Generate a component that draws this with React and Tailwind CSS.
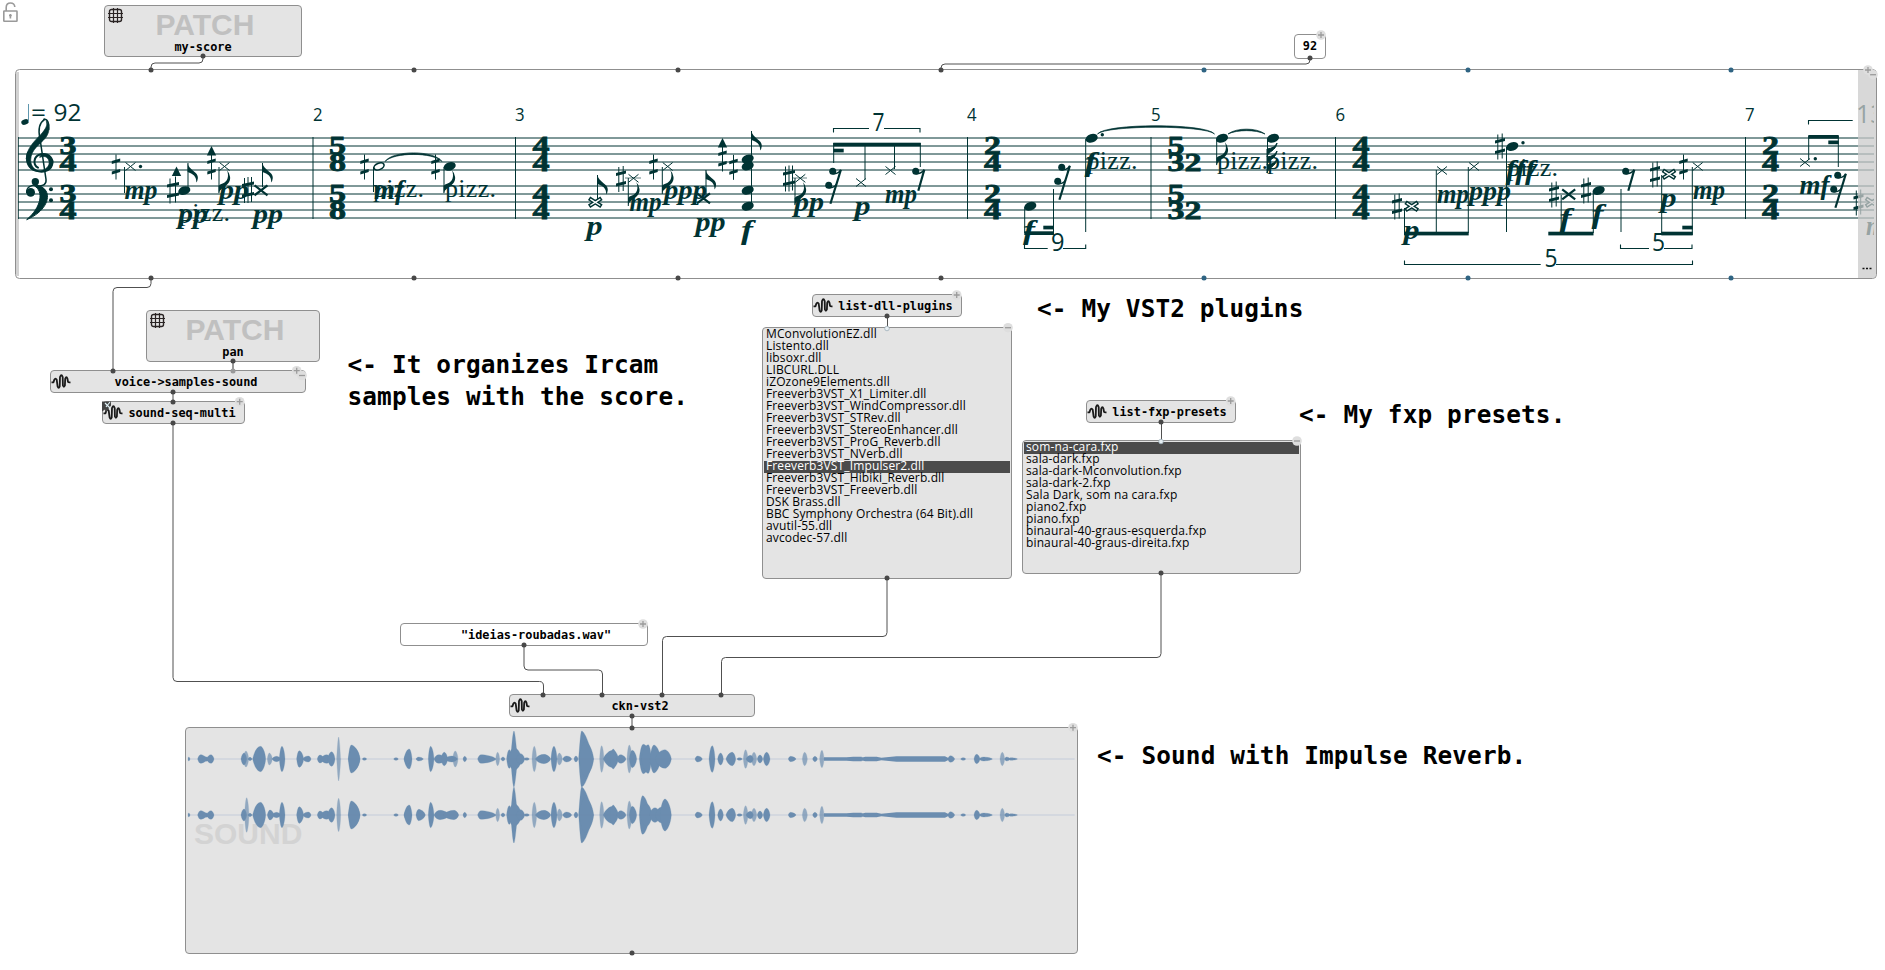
import React from 'react';

const INK = '#003333';

/* ---------- music symbols ---------- */

const Line = ({ x1, y1, x2, y2, w = 1, o = 1 }) => (
  <line x1={x1} y1={y1} x2={x2} y2={y2} stroke={INK} strokeWidth={w} opacity={o} />
);
const Stem = ({ x, a, b }) => <Line x1={x} x2={x} y1={a} y2={b} />;
const Head = ({ x, y }) => (
  <ellipse cx={x} cy={y} rx="6.200" ry="4.200" fill={INK} transform={`rotate(-18 ${x} ${y})`} />
);
const Cross = ({ x, y, rx = 5, ry = 4, w = 1 }) => (
  <path
    d={`M${x - rx} ${y - ry}L${x + rx} ${y + ry}M${x - rx} ${y + ry}L${x + rx} ${y - ry}`}
    stroke={INK}
    strokeWidth={w}
    fill="none"
  />
);
const BoldCross = ({ x, y }) => <Cross x={x} y={y} rx={6.5} ry={5} w={2.2} />;
const OpenCross = ({ x, y }) => (
  <g>
    <Cross x={x} y={y} rx={6.2} ry={4} w={4.2} />
    <path
      d={`M${x - 5} ${y - 3.2}L${x + 5} ${y + 3.2}M${x - 5} ${y + 3.2}L${x + 5} ${y - 3.2}`}
      stroke="#fff"
      strokeWidth="1.400"
    />
  </g>
);
const FlagUp = ({ x, y }) => (
  <path d={`M${x} ${y}c1 7 11 9 10.3 15q-.3 3-1.6 4.5c.4-6-3.500-9-8.700-10.500z`} fill={INK} />
);
const FlagDown = ({ x, y }) => (
  <path d={`M${x} ${y}c1-7 12.500-8 11.500-17q-.4-4-3.300-7c2.800 6 .6 12-4.200 13.500q-3 .8-4 2.500z`} fill={INK} />
);
const Slants = ({ x, y, r }) => (
  <path
    d={`M${x - r} ${y - 3}v-3l${2 * r}-2.600v3zM${x - r} ${y + 7.500}v-3l${2 * r}-2.600v3z`}
    fill={INK}
  />
);
const Sharp = ({ x, y }) => (
  <g>
    <Line x1={x - 2.2} x2={x - 2.2} y1={y - 12} y2={y + 13} />
    <Line x1={x + 2.2} x2={x + 2.2} y1={y - 13} y2={y + 12} />
    <Slants x={x} y={y} r={5} />
  </g>
);
const TripleSharp = ({ x, y }) => (
  <g>
    <Line x1={x - 3.5} x2={x - 3.5} y1={y - 12} y2={y + 13} />
    <Line x1={x} x2={x} y1={y - 13} y2={y + 13} />
    <Line x1={x + 3.5} x2={x + 3.5} y1={y - 13} y2={y + 12} />
    <Slants x={x} y={y} r={6} />
  </g>
);
const QuarterSharp = ({ x, y, arrow }) => (
  <g>
    <Line x1={x} x2={x} y1={y - (arrow ? 14 : 12.5)} y2={y + 12.5} />
    <Slants x={x} y={y} r={4.2} />
    {arrow && <path d={`M${x} ${y - 21}l4.700 9.500h-9.400z`} fill={INK} />}
  </g>
);
const ArrowSharp = ({ x, y }) => (
  <g>
    <Line x1={x - 4} x2={x - 4} y1={y - 12} y2={y + 13} />
    <Line x1={x + 1.5} x2={x + 1.5} y1={y - 14} y2={y + 12} />
    <Slants x={x - 1} y={y} r={6} />
    <path d={`M${x + 2.5} ${y - 24}l4.700 9.500h-9.400z`} fill={INK} />
  </g>
);
const Rest8 = ({ x, y }) => (
  <g fill="none" stroke={INK}>
    <circle cx={x} cy={y} r="3.5" fill={INK} stroke="none" />
    <path d={`M${x} ${y + 2.5}q5 .5 8.500-4`} strokeWidth="1.500" />
    <path d={`M${x + 8.6} ${y - 1.6}l-6 21`} strokeWidth="2.200" />
  </g>
);
const Rest16 = ({ x, y }) => (
  <g fill="none" stroke={INK}>
    <circle cx={x} cy={y} r="3.5" fill={INK} stroke="none" />
    <circle cx={x - 4} cy={y + 14} r="3.5" fill={INK} stroke="none" />
    <path d={`M${x} ${y + 2.5}q5 .5 8-4M${x - 4} ${y + 16.5}q5 .5 8-4`} strokeWidth="1.500" />
    <path d={`M${x + 8.2} ${y - 1.6}l-10.500 34`} strokeWidth="2.200" />
  </g>
);
const Dot = ({ x, y }) => <circle cx={x} cy={y} r="1.700" fill={INK} />;
const Beam = ({ a, b, y, h = 3.7 }) => <rect x={a} y={y} width={b - a} height={h} fill={INK} />;

const Dyn = ({ x, y, w, children }) => (
  <text
    x={x}
    y={y + 0.6}
    textLength={w}
    lengthAdjust="spacingAndGlyphs"
    fontFamily="'Liberation Serif', serif"
    fontStyle="italic"
    fontWeight="700"
    fontSize="27"
    fill={INK}
  >
    {children}
  </text>
);
const Pizz = ({ x, y }) => (
  <text x={x} y={y} textLength="51" fontFamily="'Liberation Serif', serif" fontSize="26" fill={INK}>
    pizz.
  </text>
);
const Num = ({ x, y, s = 17.5, w, children }) => (
  <text
    x={x}
    y={y}
    textLength={w}
    lengthAdjust="spacingAndGlyphs"
    fontFamily="'Open Sans', 'Noto Sans', sans-serif"
    fontSize={s}
    fill={INK}
  >
    {children}
  </text>
);
const TimeSig = ({ x, top, bottom }) =>
  [0, 48].map((dy) => (
    <g key={dy} fontFamily="'Liberation Serif', serif" fontWeight="700" fontSize="26" fill={INK} stroke={INK} strokeWidth=".8">
      <text x={x} y={154 + dy} textLength={17} lengthAdjust="spacingAndGlyphs">
        {top}
      </text>
      <text x={x} y={171 + dy} textLength={17 * bottom.length} lengthAdjust="spacingAndGlyphs">
        {bottom}
      </text>
    </g>
  ));
const Bracket = ({ a, b, y, t, g1, g2 }) => (
  <path d={`M${a} ${y + t}V${y}H${g1}${g2 ? `M${g2} ${y}H${b}V${y + t}` : ''}`} stroke={INK} fill="none" strokeWidth="1.100" />
);
const Tie = ({ a, b, y, p }) => (
  <path
    d={`M${a} ${y}C${a + 8} ${p} ${b - 8} ${p} ${b} ${y}C${b - 9} ${p + 2} ${a + 9} ${p + 2} ${a} ${y}z`}
    fill={INK}
    stroke={INK}
    strokeWidth=".7"
  />
);

const Clefs = () => (
  <g transform="scale(.33333)" fill="none" stroke={INK} strokeLinecap="round">
    <path d="M114 503C98 495 100 468 122 463C148 458 162 478 156 495C150 515 125 518 108 512C86 503 76 480 84 458" strokeWidth="6" />
    <path d="M122 463C150 458 164 480 155 499C146 514 128 516 118 514C138 510 150 498 147 484C144 470 132 466 120 472z" fill={INK} strokeWidth="2" />
    <path d="M79 475C79 448 102 424 122 404C138 386 143 376 139 364C149 378 150 396 137 413C120 434 93 447 92 480C92 498 103 510 120 514C95 517 79 500 79 475z" fill={INK} strokeWidth="2" />
    <path d="M134 358C118 368 114 390 120 416L138 538C140 552 130 560 112 557" strokeWidth="4.500" />
    <path d="M132 358C142 356 149 372 146 388" strokeWidth="5" />
    <circle cx="106" cy="545" r="11" fill={INK} stroke="none" />
    <circle cx="92" cy="577" r="13" fill={INK} stroke="none" />
    <path d="M80 578C78 560 98 553 112 556" strokeWidth="4" />
    <path d="M104 556C158 556 160 625 80 659C124 622 132 574 104 558z" fill={INK} strokeWidth="3" />
    <circle cx="153" cy="568" r="6" fill={INK} stroke="none" />
    <circle cx="153" cy="601" r="6" fill={INK} stroke="none" />
  </g>
);

const STAFF = [138, 146, 154, 162, 170, 186, 194, 202, 210, 218];
const BARS = [313, 515.5, 967.5, 1151, 1335.5, 1745.5];

const Notes = () => (
  <g>
    {/* bar 1 */}
    <QuarterSharp x={116} y={167} />
    <Cross x={130.5} y={166.5} />
    <Dot x={140.5} y={166.5} />
    <Stem x={124.5} a={167} b={193} />
    <Dyn x={124.500} y={198.700} w={33}>mp</Dyn>
    <ArrowSharp x={174} y={190.5} />
    <Head x={184.3} y={190.6} />
    <Stem x={188} a={163} b={190} />
    <FlagUp x={187.600} y={163} />
    <Pizz x={179} y={220.500} />
    <Dyn x={178} y={222.700} w={30}>pp</Dyn>
    <QuarterSharp x={211.5} y={167} arrow />
    <Cross x={224.5} y={166.5} />
    <Stem x={219} a={167} b={193} />
    <FlagDown x={218.600} y={194} />
    <Dyn x={219} y={198.200} w={30}>pp</Dyn>
    <TripleSharp x={248} y={190} />
    <BoldCross x={261} y={190.300} />
    <Stem x={262.5} a={163} b={187} />
    <FlagUp x={262.500} y={163} />
    <Dyn x={253} y={222.700} w={30}>pp</Dyn>
    {/* bar 2 */}
    <QuarterSharp x={364.5} y={167} />
    <ellipse cx="379" cy="166.400" rx="5.300" ry="3.200" fill="#fff" stroke={INK} strokeWidth="1.600" transform="rotate(-22 379 166.400)" />
    <Stem x={373.5} a={167} b={192} />
    <Pizz x={373} y={197} />
    <Dyn x={374} y={198} w={30}>mf</Dyn>
    <Tie a={385} b={442} y={161.500} p={150} />
    <QuarterSharp x={435.5} y={167} />
    <Head x={449.7} y={166.4} />
    <Stem x={444} a={167} b={193} />
    <FlagDown x={443.600} y={194} />
    <Pizz x={445} y={197} />
    {/* bar 3 */}
    <OpenCross x={595.3} y={202.3} />
    <Stem x={597.5} a={175} b={199} />
    <FlagUp x={597.500} y={175} />
    <Dyn x={586.500} y={234.700} w={16}>p</Dyn>
    <Sharp x={621} y={179} />
    <Cross x={633.5} y={178.300} />
    <Line x1={625} x2={641} y1={178} y2={178} o={0.6} />
    <Stem x={628.300} a={178} b={206} />
    <FlagDown x={628} y={206} />
    <Dyn x={629.500} y={210.400} w={32}>mp</Dyn>
    <QuarterSharp x={653.500} y={167} />
    <Cross x={667.7} y={166.5} />
    <Stem x={662.3} a={167} b={194} />
    <FlagDown x={662} y={194} />
    <Dyn x={664} y={198.700} w={43}>ppp</Dyn>
    <BoldCross x={703.5} y={198.300} />
    <Stem x={706} a={170} b={196} />
    <FlagUp x={705.800} y={170} />
    <Dyn x={695.500} y={230.700} w={30}>pp</Dyn>
    <QuarterSharp x={722.5} y={159} arrow />
    <QuarterSharp x={733.5} y={167.300} />
    {[159, 166, 190.300, 206.300].map((y) => <Head key={y} x={747.700} y={y} />)}
    <Stem x={751.5} a={131} b={207} />
    <FlagUp x={751.500} y={131} />
    <Dyn x={741} y={238.500} w={12}>f</Dyn>
    <TripleSharp x={789} y={178.5} />
    <Cross x={800.300} y={178.300} />
    <Line x1={792} x2={807} y1={178} y2={178} o={0.6} />
    <Stem x={795} a={178} b={205} />
    <FlagDown x={794.600} y={206} />
    <Dyn x={794} y={210.400} w={30}>pp</Dyn>
    <Bracket a={833.5} b={920} y={128.5} t={4} g1={869} g2={884} />
    <Num x={872.500} y={130.700} s={25} w={12}>7</Num>
    <Beam a={833.300} b={920.700} y={142.700} />
    <Beam a={833.300} b={843.700} y={148.700} />
    <Stem x={833.700} a={143} b={163} />
    <Stem x={865} a={143} b={179.500} />
    <Stem x={894.500} a={143} b={169} />
    <Stem x={920.300} a={143} b={167} />
    <Rest16 x={832.7} y={171.3} />
    <Cross x={861} y={182.500} />
    <Dyn x={854.500} y={214.400} w={16}>p</Dyn>
    <Cross x={890.5} y={170.5} />
    <Dyn x={885} y={202.400} w={32}>mp</Dyn>
    <Rest8 x={915.7} y={171.3} />
    {/* bar 4 */}
    <Head x={1030.3} y={206.3} />
    <Stem x={1024.7} a={207} b={233} />
    <Beam a={1024.300} b={1053.700} y={231.300} />
    <Beam a={1043.300} b={1053.700} y={225.700} />
    <Stem x={1053.5} a={189} b={235} />
    <Dyn x={1023} y={238.500} w={12}>f</Dyn>
    <Rest16 x={1061.7} y={167.3} />
    <Bracket a={1024.500} b={1085.700} y={248.500} t={-4} g1={1047.700} g2={1063} />
    <Num x={1051} y={250.500} s={25} w={13.500}>9</Num>
    <Head x={1091.7} y={138.3} />
    <Dot x={1102.3} y={134.7} />
    <Stem x={1085.7} a={139} b={232} />
    <Pizz x={1086.500} y={169} />
    <Dyn x={1084.500} y={170.500} w={12}>f</Dyn>
    <Tie a={1097.500} b={1214.500} y={134} p={123} />
    {/* bar 5 */}
    <Head x={1222} y={138.3} />
    <Stem x={1216.700} a={139} b={165} />
    <FlagDown x={1216.500} y={166} />
    <Pizz x={1217} y={169} />
    <Tie a={1228} b={1265} y={134} p={127.500} />
    <Head x={1273} y={138.3} />
    <Stem x={1267.5} a={139} b={173} />
    {[157, 165, 173].map((y) => (
      <path key={y} d={`M1267 ${y}c1-6 9-6 10-14q-2 5-10 6z`} fill={INK} stroke={INK} />
    ))}
    <Pizz x={1267} y={169} />
    {/* bar 6 */}
    <Sharp x={1397} y={206.5} />
    <OpenCross x={1411.7} y={206.3} />
    <Stem x={1404.5} a={208} b={233} />
    <Dyn x={1403.500} y={238.400} w={16}>p</Dyn>
    <Beam a={1404} b={1468.700} y={231.700} />
    <Stem x={1436.3} a={170} b={233} />
    <Stem x={1468.3} a={167} b={233} />
    <Cross x={1442} y={170.5} />
    <Cross x={1474} y={166.5} />
    <Dyn x={1437} y={202.400} w={32}>mp</Dyn>
    <Dyn x={1469} y={199} w={42}>ppp</Dyn>
    <Sharp x={1500} y={146.500} />
    <Head x={1512.3} y={146.500} />
    <Dot x={1523} y={142.7} />
    <Stem x={1506.5} a={147} b={232} />
    <Pizz x={1507} y={176} />
    <Dyn x={1505.500} y={178.500} w={30}>fff</Dyn>
    <Sharp x={1554} y={194.5} />
    <BoldCross x={1568.7} y={194.300} />
    <Stem x={1561.200} a={195} b={233} />
    <Dyn x={1559.500} y={226.500} w={12}>f</Dyn>
    <Sharp x={1586} y={190.5} />
    <Head x={1598.7} y={190.500} />
    <Stem x={1593.300} a={191} b={233} />
    <Dyn x={1591.500} y={222.500} w={12}>f</Dyn>
    <Beam a={1548.300} b={1593.500} y={231.700} />
    <Rest8 x={1625.7} y={171.300} />
    <Stem x={1621} a={189} b={232} />
    <Sharp x={1655} y={174.5} />
    <OpenCross x={1669} y={174.300} />
    <Stem x={1661.700} a={175} b={233} />
    <Dyn x={1660.500} y={206.400} w={16}>p</Dyn>
    <QuarterSharp x={1683.500} y={167} />
    <Cross x={1697.700} y={166.500} />
    <Stem x={1692.300} a={167} b={235} />
    <Dyn x={1693} y={198.700} w={32}>mp</Dyn>
    <Beam a={1661.300} b={1692.700} y={231.700} />
    <Beam a={1682.300} b={1692.700} y={225.700} />
    <Bracket a={1620.500} b={1692} y={248.500} t={-4} g1={1649} g2={1664} />
    <Num x={1652} y={250.500} s={25} w={13}>5</Num>
    <Bracket a={1404.500} b={1692.500} y={264.500} t={-4} g1={1540.700} g2={1556} />
    <Num x={1544.500} y={266.500} s={25} w={13}>5</Num>
    {/* bar 7 */}
    <Bracket a={1808.500} y={120.500} t={4} g1={1852.700} />
    <Num x={1856} y={122.700} s={25}>13</Num>
    <Beam a={1808.300} b={1838.700} y={135} />
    <Beam a={1828.300} b={1838.700} y={140.500} />
    <Stem x={1808.700} a={136} b={160} />
    <Stem x={1838.300} a={136} b={167} />
    <Cross x={1805} y={162.5} />
    <Dot x={1815.3} y={158.7} />
    <Dyn x={1799.500} y={193.500} w={30}>mf</Dyn>
    <Rest16 x={1837.7} y={175.3} />
    <Sharp x={1858.5} y={202.500} />
    <OpenCross x={1872} y={202.300} />
    <Dyn x={1866} y={234} w={32}>mp</Dyn>
  </g>
);

const Score = () => (
  <svg className="absolute top-0 left-0" width="1885" height="290">
    <defs>
      <clipPath id="staff-area">
        <rect x="17" y="71" width="1857" height="207" />
      </clipPath>
    </defs>
    <rect x="15.500" y="69.500" width="1861" height="209" rx="4" fill="#fff" stroke="#8f8f8f" />
    <rect x="16" y="72" width="3" height="204" fill="#d2d2d2" />
    <g clipPath="url(#staff-area)">
      {STAFF.map((y) => (
        <line key={y} x1="18" x2="1874" y1={y} y2={y} stroke={INK} />
      ))}
      <line x1="18.500" x2="18.500" y1="137" y2="219" stroke={INK} opacity=".7" />
      {BARS.map((x) => (
        <line key={x} x1={x} x2={x} y1="137" y2="219" stroke={INK} />
      ))}
      <Clefs />
      <ellipse cx="25" cy="122" rx="3.800" ry="2.700" fill={INK} transform="rotate(-18 25 122)" />
      <line x1="28.500" x2="28.500" y1="104" y2="122" stroke="#5f97ae" />
      <Num x={31} y={120.500} s={24.500} w={15}>=</Num>
      <Num x={53.500} y={120.500} s={24.500} w={28}>92</Num>
      {[[313, '2'], [515, '3'], [967, '4'], [1151, '5'], [1335.500, '6'], [1745, '7']].map(([x, n]) => (
        <Num key={n} x={x} y={121} w={9.600}>{n}</Num>
      ))}
      <TimeSig x={59.500} top="3" bottom="4" />
      <TimeSig x={329} top="5" bottom="8" />
      <TimeSig x={532.500} top="4" bottom="4" />
      <TimeSig x={984} top="2" bottom="4" />
      <TimeSig x={1167.500} top="5" bottom="32" />
      <TimeSig x={1352.500} top="4" bottom="4" />
      <TimeSig x={1762} top="2" bottom="4" />
      <Notes />
    </g>
    <path d="M1858 70H1872Q1876 70 1876 74V274Q1876 278 1872 278H1858z" fill="#cacaca" fillOpacity=".74" />
    <path d="M1862.500 268.500h2M1866 268.500h2M1869.500 268.500h2" stroke="#111" strokeWidth="1.500" />
  </svg>
);

/* ---------- waveform ---------- */

const COMMON = [
  [24, 26, 30, 6], [53, 62, 80, 13], [66, 75, 92, 7], [80, 93, 102, 13], [218, 242, 257, 38], [276, 290, 302, 8],
  [298, 306, 315, 38], [350, 358, 371, 25], [368, 385, 393, 9], [412, 420, 432, 12], [422, 440, 454, 13], [443, 455, 465, 22],
  [505, 514, 540, 42], [505, 522, 540, 34], [547, 553, 560, 4], [641, 648, 655, 4], [672, 688, 696, 30], [672, 684, 694, 16], [745, 752, 762, 38],
  [849, 854, 860, 8], [893, 903, 948, 13], [947, 953, 959, 20], [963, 969, 975, 6], [980, 988, 997, 28], [992, 1002, 1012, 84], [985, 1003, 1025, 34],
  [1008, 1022, 1034, 16], [1032, 1040, 1048, 4], [1056, 1063, 1070, 38], [1066, 1092, 1112, 14], [1113, 1122, 1131, 38],
  [1131, 1138, 1147, 18], [1148, 1160, 1175, 9], [1182, 1188, 1194, 9], [1196, 1205, 1240, 84], [1198, 1215, 1241, 52], [1259, 1265, 1272, 40],
  [1270, 1300, 1315, 26], [1290, 1300, 1309, 30], [1310, 1322, 1338, 13], [1341, 1348, 1356, 42], [1348, 1357, 1370, 26],
  [1545, 1553, 1567, 9], [1587, 1597, 1605, 40], [1613, 1622, 1630, 18], [1638, 1657, 1667, 20], [1671, 1678, 1687, 4],
  [1690, 1697, 1704, 28], [1698, 1712, 1720, 11], [1714, 1722, 1730, 20], [1732, 1740, 1748, 12], [1750, 1760, 1770, 20],
  [1825, 1832, 1848, 8], [1867, 1874, 1882, 20], [1898, 1905, 1912, 8], [1919, 1926, 1932, 26], [2303, 2312, 2324, 10],
  [2342, 2350, 2357, 4], [2382, 2390, 2400, 14], [2398, 2410, 2437, 6], [2460, 2467, 2474, 20], [2474, 2480, 2490, 6], [2486, 2493, 2512, 4],
];
const LEFT = [
  [183, 192, 200, 18], [190, 198, 206, 24], [204, 210, 216, 5], [262, 268, 277, 18], [470, 476, 482, 66], [708, 716, 730, 6], [762, 776, 800, 13], [783, 793, 803, 20],
  [795, 815, 832, 9], [818, 826, 834, 24], [1378, 1390, 1414, 44], [1384, 1405, 1414, 43], [1410, 1422, 1442, 42], [1425, 1455, 1474, 28],
];
const RIGHT = [
  [183, 192, 200, 18], [194, 200, 207, 52], [204, 210, 216, 5], [262, 270, 282, 15], [470, 476, 482, 50], [708, 716, 736, 17], [762, 780, 808, 14],
  [790, 822, 836, 14], [1378, 1388, 1408, 58], [1380, 1400, 1416, 34], [1408, 1425, 1442, 22], [1425, 1446, 1460, 24], [1440, 1455, 1474, 48],
];

const blob = ([a, p, b, h]) => {
  const l = p - a;
  const r = b - p;
  const full = h < 60 ? 0.6 : 0.25;
  const half = (s) =>
    `C${a + l * 0.2} ${s * h * full} ${p - l * 0.4} ${s * h} ${p} ${s * h}C${p + r * 0.3} ${s * h} ${b - r * 0.1} ${s * h * full} ${b} 0`;
  return `M${a} 0${half(-1)}M${a} 0${half(1)}z`;
};

const Channel = ({ y, extra }) => (
  <g transform={`translate(-6 ${y}) scale(.33333)`} fill="#6b8db0">
    <path d="M24 0H2684" stroke="#c3ccd9" strokeWidth="3.500" />
    {[...COMMON, ...extra].map((s) => (
      <path key={s.join()} d={blob(s)} opacity={s[2] - s[0] < 17 && s[3] > 15 && s[3] < 80 ? 0.68 : 1} stroke="#6b8db0" strokeOpacity=".25" strokeWidth="3" />
    ))}
    <path d="M1932 0V-5H2000L2020-7H2045V-5H2050L2056-7H2090L2104-4L2150-8H2295L2305-3V3L2295 8H2150L2104 4L2090 7H2056L2050 5H2045V7H2020L2000 5H1932z" />
  </g>
);

/* ---------- patch nodes ---------- */

const WaveIcon = () => (
  <svg className="absolute top-[3px] left-0" width="20" height="16" fill="none" stroke="#1a1a1a" strokeWidth="1.800" strokeLinejoin="round">
    <path d="M.5 8.300H2.500L3.300 5.700Q4.500 3.500 5.700 5.700L6.600 12.500Q7.700 15.300 8.700 12.500L9 3Q10.400-.5 11.700 3L11.900 11.500Q12.900 14 13.900 11.500L14.200 4.800Q15.400 1.500 16.500 4.800L17 7.800Q17.300 8.500 19.500 8.300" />
  </svg>
);
const GridIcon = () => (
  <svg className="absolute top-[2px] left-[3px]" width="15" height="15" fill="none" stroke="#2a2424">
    <rect x="1.500" y="1.500" width="12" height="12" rx="2" strokeWidth="1.400" />
    <path d="M5.500 0V15M9.500 0V15M0 5.500H15M0 9.500H15" strokeWidth="1.200" />
  </svg>
);

const Badge = ({ x, y, minus }) => (
  <g>
    <circle cx={x} cy={y} r="4.800" fill="#dedede" />
    <path d={minus ? `M${x - 3} ${y}h6` : `M${x - 3} ${y}h6M${x} ${y - 3}v6`} stroke="#9b9b9b" strokeWidth="1.300" />
  </g>
);

const Node = ({ className, children }) => (
  <div className={`absolute flex items-center justify-center rounded-[4px] border border-[#8f8f8f] ${className}`}>{children}</div>
);
const Label = ({ className = 'pt-0.5', children }) => (
  <span className={`font-['DejaVu_Sans_Mono',monospace] text-[11.88px] leading-none font-bold whitespace-pre text-black ${className}`}>{children}</span>
);
const Patch = ({ className, name }) => (
  <div className={`absolute flex h-[52px] flex-col items-center rounded-[4px] border border-[#8f8f8f] bg-[#e4e4e4] ${className}`}>
    <GridIcon />
    <span className="mt-px pl-1 font-['Liberation_Sans',sans-serif] text-[30px] leading-[36px] font-bold text-[#c0c0c0]">PATCH</span>
    <Label className="-mt-px">{name}</Label>
  </div>
);
const List = ({ className, items, selected }) => (
  <ul className={`absolute rounded-[4px] border border-[#8f8f8f] bg-[#e4e4e4] px-px pt-px font-['Open_Sans','Noto_Sans',sans-serif] text-[12px] leading-[12px] tracking-[0.13px] ${className}`}>
    {items.map((t, i) => (
      <li key={t} className={`h-3 pl-0.5 whitespace-pre ${i === selected ? 'bg-[#4b4b4b] text-white' : 'text-black'}`}>
        <span className="relative -top-px">{t}</span>
      </li>
    ))}
  </ul>
);
const Note = ({ className, children }) => (
  <p className={`absolute font-['DejaVu_Sans_Mono',monospace] text-[24.4px] leading-8 font-bold tracking-[0.12px] whitespace-pre text-black ${className}`}>{children}</p>
);

const DLLS = [
  'MConvolutionEZ.dll', 'Listento.dll', 'libsoxr.dll', 'LIBCURL.DLL', 'iZOzone9Elements.dll', 'Freeverb3VST_X1_Limiter.dll',
  'Freeverb3VST_WindCompressor.dll', 'Freeverb3VST_STRev.dll', 'Freeverb3VST_StereoEnhancer.dll', 'Freeverb3VST_ProG_Reverb.dll',
  'Freeverb3VST_NVerb.dll', 'Freeverb3VST_Impulser2.dll', 'Freeverb3VST_Hibiki_Reverb.dll', 'Freeverb3VST_Freeverb.dll',
  'DSK Brass.dll', 'BBC Symphony Orchestra (64 Bit).dll', 'avutil-55.dll', 'avcodec-57.dll',
];
const PRESETS = [
  'som-na-cara.fxp', 'sala-dark.fxp', 'sala-dark-Mconvolution.fxp', 'sala-dark-2.fxp', 'Sala Dark, som na cara.fxp',
  'piano2.fxp', 'piano.fxp', 'binaural-40-graus-esquerda.fxp', 'binaural-40-graus-direita.fxp',
];

const CABLES = [
  'M203 57V59Q203 63 199 63H155Q151 63 151 67V70',
  'M1310 58V60Q1310 64 1306 64H945Q941 64 941 68V70',
  'M151 278V283.500Q151 287.500 147 287.500H117Q113 287.500 113 291.500V371',
  'M173 392V402',
  'M173 423V677.500Q173 681.500 177 681.500H539.500Q543.500 681.500 543.500 686V695',
  'M524 645V666Q524 670 528 670H598.500Q602.500 670 602.500 674V695',
  'M887 578V632.500Q887 636.500 883 636.500H666.500Q662.500 636.500 662.500 640.500V695',
  'M1161 573V653.500Q1161 657.500 1157 657.500H725.500Q721.500 657.500 721.500 661.500V695',
  'M887.500 316V328', 'M1161.500 422V441', 'M632 716V728',
];
const PORTS = [
  [203, 56], [151, 70], [414, 70], [678, 70], [941, 70], [151, 278], [414, 278], [678, 278], [941, 278], [1310, 58],
  [113, 371], [233, 361], [173, 392], [173, 402], [173, 423], [524, 645], [543, 695], [602, 695], [662, 695], [721, 695],
  [887, 316], [887, 578], [1161, 422], [1161, 573], [632, 716], [632, 728], [632, 953],
];
const BLUE_PORTS = [[1204, 70], [1468, 70], [1731, 70], [1204, 278], [1468, 278], [1731, 278]];

export default function App() {
  return (
    <main className="relative h-[970px] w-[1885px] overflow-hidden bg-white">
      <svg className="absolute top-0 left-0" width="22" height="24" fill="none" stroke="#9a9a9a" strokeWidth="1.600">
        <rect x="3.800" y="11" width="13.200" height="10.300" rx=".5" />
        <path d="M6.200 11V7.500Q6.200 3 10.500 3Q14.500 3 14.800 7" />
        <path d="M10.400 14V18.500M9 15.500H11.800" />
      </svg>

      <Score />

      <Patch className="top-[5px] left-[104px] w-[198px]" name="my-score" />
      <Node className="top-[34px] left-[1294px] h-[25px] w-[32px] bg-white"><Label className="pt-px">92</Label></Node>
      <Patch className="top-[310px] left-[146px] w-[174px]" name="pan" />

      <Node className="top-[370px] left-[50px] h-[23px] w-[256px] bg-[#e4e4e4] pl-4"><WaveIcon /><Label>{'voice->samples-sound'}</Label></Node>
      <Node className="top-[401px] left-[102px] h-[23px] w-[143px] bg-[#e4e4e4] pl-[17px]"><WaveIcon /><Label>sound-seq-multi</Label></Node>
      <Node className="top-[294px] left-[812px] h-[23px] w-[150px] bg-[#e4e4e4] pl-[17px]"><WaveIcon /><Label>list-dll-plugins</Label></Node>
      <Node className="top-[400px] left-[1086px] h-[23px] w-[150px] bg-[#e4e4e4] pl-[17px]"><WaveIcon /><Label>list-fxp-presets</Label></Node>
      <Node className="top-[623px] left-[400px] h-[23px] w-[248px] bg-white pl-6"><Label>"ideias-roubadas.wav"</Label></Node>
      <Node className="top-[694px] left-[509px] h-[23px] w-[246px] bg-[#e4e4e4] pl-4"><WaveIcon /><Label>ckn-vst2</Label></Node>

      <List className="top-[327px] left-[762px] h-[252px] w-[250px]" items={DLLS} selected={11} />
      <List className="top-[440px] left-[1022px] h-[134px] w-[279px]" items={PRESETS} selected={0} />

      <div className="absolute top-[727px] left-[185px] h-[227px] w-[893px] rounded-[4px] border border-[#8f8f8f] bg-[#e4e4e4]">
        <span className="absolute top-[89px] left-[8px] font-['Liberation_Sans',sans-serif] text-[30px] leading-[34px] font-bold text-[#d3d3d3]">SOUND</span>
        <svg className="absolute top-0 left-0" width="891" height="225">
          <Channel y={31} extra={LEFT} />
          <Channel y={87} extra={RIGHT} />
        </svg>
      </div>

      <Note className="top-[349px] left-[347.500px]">{'<- It organizes Ircam\nsamples with the score.'}</Note>
      <Note className="top-[293px] left-[1037px]">{'<- My VST2 plugins'}</Note>
      <Note className="top-[399px] left-[1299px]">{'<- My fxp presets.'}</Note>
      <Note className="top-[740px] left-[1097px]">{'<- Sound with Impulse Reverb.'}</Note>

      <svg className="pointer-events-none absolute top-0 left-0" width="1885" height="970">
        <g fill="none" stroke="#505050">
          {CABLES.map((d) => <path key={d} d={d} />)}
          <path d="M233 361V371" stroke="#777" strokeWidth="1.500" />
        </g>
        {PORTS.map(([x, y]) => <circle key={`${x}-${y}`} cx={x} cy={y} r="2.500" fill="#484848" />)}
        {BLUE_PORTS.map(([x, y]) => <circle key={`${x}-${y}`} cx={x} cy={y} r="2.500" fill="#2f6483" />)}
        <circle cx="233" cy="371" r="2.500" fill="#999" />
        <circle cx="887" cy="328.500" r="2.300" fill="#e6eef2" stroke="#9fb0ba" strokeWidth=".8" />
        <circle cx="1161" cy="441.500" r="2.300" fill="#e6eef2" stroke="#9fb0ba" strokeWidth=".8" />
        <path d="M102 401.500h9v4l-3 4-2 3-1-3-3 2z" fill="#444" />
        <path d="M105 403l5 5M110 402l-4 5" stroke="#dff0f5" strokeWidth="1.200" />
        <Badge x={1321} y={35} />
        <Badge x={1873} y={74.700} minus />
        <Badge x={1868} y={70} />
        <Badge x={302} y={375.500} minus />
        <Badge x={296.700} y={370.700} />
        <Badge x={239.700} y={401.700} />
        <Badge x={956.700} y={295} />
        <Badge x={1008} y={327.700} minus />
        <Badge x={1230.700} y={401} />
        <Badge x={1297} y={441} minus />
        <Badge x={643} y={624} />
        <Badge x={1073} y={727.700} />
      </svg>
    </main>
  );
}
